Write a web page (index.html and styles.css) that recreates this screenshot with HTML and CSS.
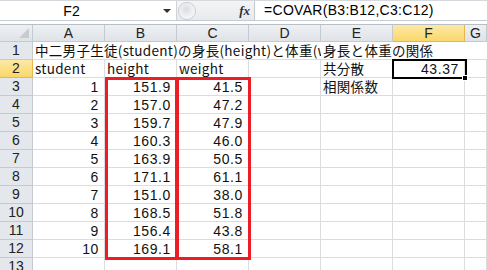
FILE: index.html
```html
<!DOCTYPE html>
<html lang="ja">
<head>
    <meta charset="UTF-8">
    <title>COVAR</title>
    <link rel="stylesheet" href="styles.css">
</head>
<body>
    <div class="formula-bar">
        <div class="name-box">
            <span class="name">F2</span>
            <span class="arrow"></span>
        </div>
        <div class="fx-area">
            <span class="knob"></span>
            <span class="fx">fx</span>
        </div>
        <div class="formula">=COVAR(B3:B12,C3:C12)</div>
    </div>
    <div class="gap"></div>

    <div class="sheet" id="sheet">
        <!-- cells are built by the script below -->
    </div>

    <script>
        const cols = ['A', 'B', 'C', 'D', 'E', 'F', 'G'];
        const heights = [151.9, 157.0, 159.7, 160.3, 163.9, 171.1, 151.0, 168.5, 156.4, 169.1];
        const weights = [41.5, 47.2, 47.9, 46.0, 50.5, 61.1, 38.0, 51.8, 43.8, 58.1];

        const sheet = document.getElementById('sheet');

        function cell(text, cls) {
            const div = document.createElement('div');
            div.className = cls;
            div.textContent = text;
            sheet.appendChild(div);
            return div;
        }

        // column headers
        cell('', 'corner');
        cols.forEach(c => cell(c, c === 'F' ? 'col-head active' : 'col-head'));

        // row 1: both titles run over the empty cells to their right
        cell('1', 'row-head');
        const title = cell('中二男子生徒(student)の身長(height)と体重(weight)', 'cell text overflow');
        title.style.gridColumn = 'span 4';
        const sub = cell('身長と体重の関係', 'cell text overflow');
        sub.style.gridColumn = 'span 3';

        // row 2
        cell('2', 'row-head active');
        cell('student', 'cell text');
        cell('height', 'cell text');
        cell('weight', 'cell text');
        cell('', 'cell');
        cell('共分散', 'cell text');
        cell('43.37', 'cell num');
        cell('', 'cell');

        // rows 3..12
        heights.forEach((h, i) => {
            cell(String(i + 3), 'row-head');
            cell(String(i + 1), 'cell num');
            cell(h.toFixed(1), 'cell num');
            cell(weights[i].toFixed(1), 'cell num');
            cell('', 'cell');
            cell(i === 0 ? '相関係数' : '', 'cell text');
            cell('', 'cell');
            cell('', 'cell');
        });

        // row 13
        cell('13', 'row-head');
        cols.forEach(() => cell('', 'cell'));

        // overlays
        cell('', 'red-box box-b');
        cell('', 'red-box box-c');
        cell('', 'selected');
        cell('', 'fill-handle');
    </script>
</body>
</html>
```

FILE: styles.css
```css
body {
    margin: 0;
    padding: 0;
    width: 487px;
    height: 270px;
    overflow: hidden;
    background: #fff;
    font-family: "Liberation Sans", "Noto Sans CJK JP", sans-serif;
    font-size: 14px;
    color: #000;
}

.formula-bar {
    display: flex;
    height: 21px;
    border-top: 1px solid #d5d9de;
    border-bottom: 1px solid #c6ccd3;
    box-sizing: border-box;
}
.name-box {
    width: 176px;
    display: flex;
    align-items: center;
}
.name {
    flex: 1;
    text-align: center;
    padding-right: 20px;
    font-size: 14px;
}
.arrow {
    width: 0;
    height: 0;
    border-left: 4px solid transparent;
    border-right: 4px solid transparent;
    border-top: 4px solid #333;
    margin-right: 5px;
}
.fx-area {
    width: 79px;
    display: flex;
    align-items: center;
    background: linear-gradient(#f4f4f4, #e9eaec);
    border-left: 1px solid #d0d4d9;
    border-right: 1px solid #c3c8ce;
    box-sizing: border-box;
}
.knob {
    width: 16px;
    height: 16px;
    margin-left: 1px;
    border-radius: 50%;
    border: 1px solid #c9cdd2;
    background: radial-gradient(circle at 45% 40%, #d9dbde 0, #e9eaec 35%, #f7f7f7 70%);
}
.fx {
    margin-left: auto;
    margin-right: 4px;
    font-family: "Liberation Serif", serif;
    font-style: italic;
    font-weight: bold;
    font-size: 13px;
    color: #333;
}
.formula {
    flex: 1;
    padding-left: 9px;
    line-height: 19px;
    font-size: 14px;
    letter-spacing: 0.3px;
}

.gap {
    height: 3px;
    border-bottom: 1px solid #b9bec5;
}

.sheet {
    position: relative;
    display: grid;
    grid-template-columns: 33px repeat(6, 72px) 22px;
    grid-template-rows: 17px repeat(13, 18px);
}

.corner,
.col-head,
.row-head {
    background: linear-gradient(#eef0f3, #dfe3e8);
    border-right: 1px solid #c5cad1;
    border-bottom: 1px solid #c5cad1;
    box-sizing: border-box;
    text-align: center;
    color: #222;
    font-size: 14px;
}
.corner {
    position: relative;
}
.corner:after {
    content: '';
    position: absolute;
    right: 3px;
    bottom: 3px;
    border-left: 10px solid transparent;
    border-bottom: 10px solid #c8ccd2;
}
.col-head {
    line-height: 16px;
}
.row-head {
    line-height: 17px;
    background: #e4e8ed;
}
.col-head.active,
.row-head.active {
    background: linear-gradient(#fde9a6, #f9d76a);
    border-right-color: #e9b64b;
    border-bottom-color: #e9b64b;
}

.cell {
    border-right: 1px solid #dadcdd;
    border-bottom: 1px solid #dadcdd;
    box-sizing: border-box;
    line-height: 18px;
    white-space: nowrap;
    overflow: hidden;
    font-size: 14px;
    color: #111;
}
.cell.text {
    padding-left: 2px;
    font-family: "Noto Sans CJK JP", sans-serif;
    font-size: 13.5px;
    line-height: 17px;
    letter-spacing: 0.3px;
}
.cell.num {
    text-align: right;
    padding-right: 5px;
    letter-spacing: 0.6px;
}
.cell.overflow {
    border-right: none;
}

.red-box {
    position: absolute;
    top: 52px;
    height: 183px;
    border: 3px solid #ee1c25;
    box-sizing: border-box;
}
.box-b {
    left: 105px;
    width: 73px;
}
.box-c {
    left: 176px;
    width: 75px;
}
.selected {
    position: absolute;
    left: 392px;
    top: 34px;
    width: 75px;
    height: 20px;
    border: 2px solid #000;
    box-sizing: border-box;
}
.fill-handle {
    position: absolute;
    left: 462px;
    top: 50px;
    width: 6px;
    height: 6px;
    background: #000;
    border: 1px solid #fff;
    box-sizing: border-box;
}
```
